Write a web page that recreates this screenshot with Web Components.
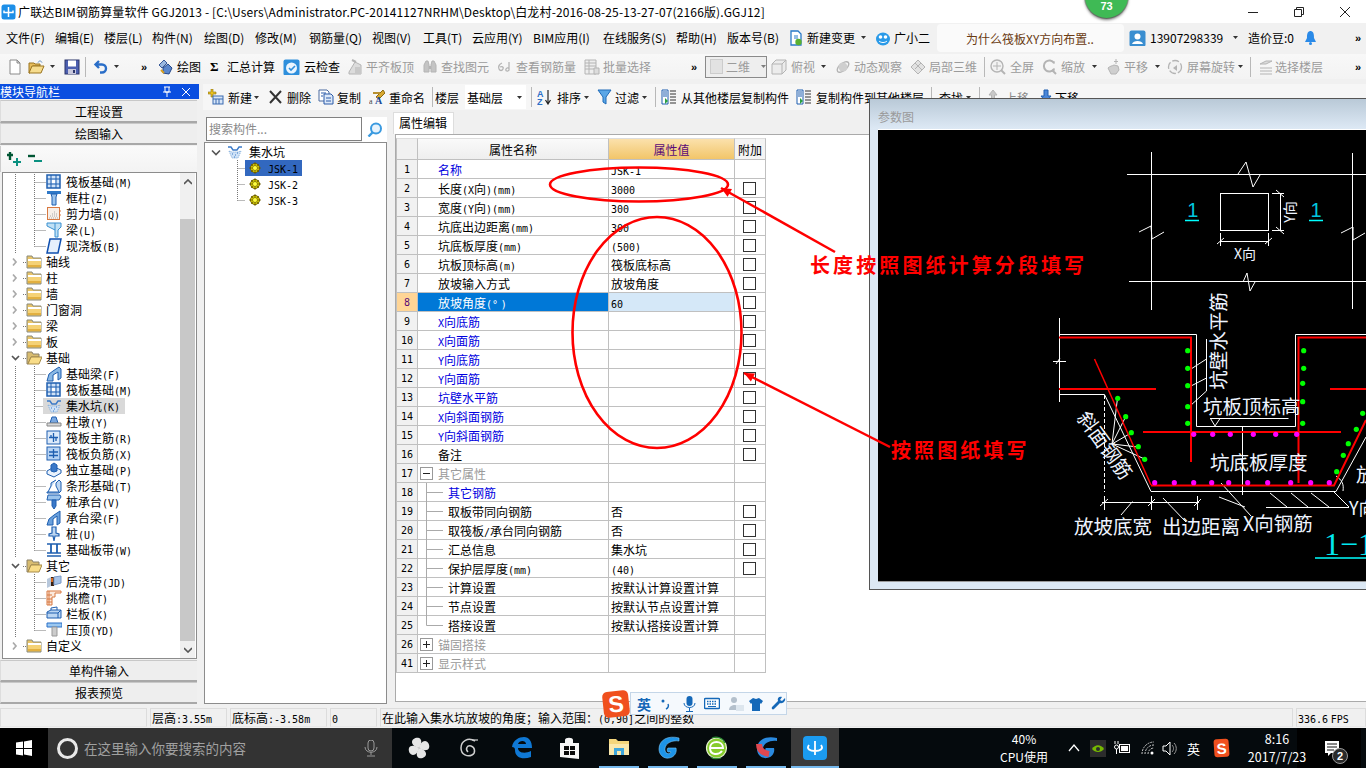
<!DOCTYPE html>
<html lang="zh"><head><meta charset="utf-8"><title>广联达BIM钢筋算量软件</title>
<style>
html,body{margin:0;padding:0;width:1366px;height:768px;overflow:hidden;background:#f0f0f0;font:12px "Noto Sans CJK SC","Liberation Sans",sans-serif;color:#000}
</style></head><body>
<gl-app>
  <gl-titlebar></gl-titlebar>
  <gl-menubar></gl-menubar>
  <gl-toolbar></gl-toolbar>
  <gl-main>
    <gl-nav slot="nav"></gl-nav>
    <gl-subbar slot="bar"></gl-subbar>
    <gl-list slot="list"></gl-list>
    <gl-props slot="props"></gl-props>
  </gl-main>
  <gl-status></gl-status>
  <win-taskbar></win-taskbar>
  <gl-badge>73</gl-badge>
  <gl-dialog></gl-dialog>
  <gl-ime></gl-ime>
  <gl-marks></gl-marks>
</gl-app>
<script>
const CJK='"Noto Sans CJK SC","Liberation Sans",sans-serif';
const MONO='"DejaVu Sans Mono","Noto Sans CJK SC",monospace';
const esc=s=>s.replace(/&/g,'&amp;').replace(/</g,'&lt;');
// Latin runs of the app's bitmap font are 6px per character
const fmt=s=>esc(s).replace(/[\x21-\x7e°]+/g,m=>`<span class="l">${m}</span>`);
const svg=(body,w=16,h=16,vb)=>`<svg width="${w}" height="${h}" viewBox="${vb||`0 0 ${w} ${h}`}" style="display:block;flex:none">${body}</svg>`;
const G='#b4b4b4',G2='#dcdcdc',B='#1f5fb0',L='#cfe2f7';
const I={
new:`<path d="M3 1h7l3 3v11H3z" fill="#fff" stroke="#8a8a8a"/><path d="M10 1v3h3z" fill="#ddd" stroke="#8a8a8a"/>`,
open:`<path d="M1 4h5l1 1h5v2H5l-3 7H1z" fill="#e7bd5c" stroke="#9a7420"/><path d="M4 7h12l-3 7H1z" fill="#f6dc8e" stroke="#9a7420"/><path d="M10 3.500c1-2 3-2 4 0" stroke="#5a8ac0" fill="none"/>`,
save:`<rect x="1" y="1" width="14" height="14" fill="#4c5fb0" stroke="#2a3468"/><rect x="4" y="1.500" width="8" height="6" fill="#fff"/><rect x="4" y="10" width="8" height="5" fill="#c8c8dc"/><rect x="9" y="11" width="2" height="3" fill="#2a3468"/>`,
undo:`<path d="M6 2L2.500 5.500 6 9M3 5.500h6a4 4 0 0 1 0 8H7" stroke="#2a6ec8" stroke-width="2.400" fill="none"/>`,
draw:`<path d="M2 6l5-5 3 3-5 5z" fill="#9ab8e0" stroke="#3a5a98"/><path d="M6 9l5-4 4 4-3 6-6-1z" fill="#5a86cc" stroke="#24488a"/><path d="M4 11l3 3" stroke="#d8a020" stroke-width="2"/>`,
cloud:`<rect x="0.500" y="0.500" width="16" height="16" rx="2" fill="#2e8fdc"/><circle cx="8.500" cy="9" r="5.500" fill="#eaf5ff"/><path d="M6 9l2 2 4-4" stroke="#2e8fdc" stroke-width="1.600" fill="none"/>`,
align:`<path d="M2 13l6-10 6 3v9H2z" fill="${G2}" stroke="${G}"/><path d="M8 8h6v7H8z" fill="#c8c8c8"/><path d="M5 1l4 2" stroke="${G}" stroke-width="2"/>`,
binoc:`<path d="M2 6l2-4h2l1 4v7H2zM9 6l1-4h2l2 4v7H9z" fill="#c4c4c4" stroke="${G}"/><path d="M7 7h2v3H7z" fill="${G}"/>`,
six:`<path d="M6 4C3 5 2 8 3 10s3 2 4 0-1-3-3-2M13 3v8c-1 2-4 1-3-1s3-1 3 0" stroke="${G}" stroke-width="1.300" fill="none"/>`,
batch:`<path d="M1 1h11v14H1z" fill="#eee" stroke="${G}"/><path d="M1 4h11M1 7h11M1 10h11M5 1v14" stroke="${G}"/><path d="M10 9h5v6h-5z" fill="${G2}" stroke="${G}"/>`,
cube:`<path d="M1 5l4-4h10v10l-4 4H1z" fill="#ececec" stroke="${G}"/><path d="M1 5h10v10M11 5l4-4" fill="none" stroke="${G}"/>`,
orbit:`<ellipse cx="8" cy="8" rx="7" ry="3.500" transform="rotate(-40 8 8)" fill="none" stroke="${G}" stroke-width="1.400"/><circle cx="8" cy="8" r="4.500" fill="#cfcfcf"/>`,
local:`<path d="M8 1l7 7-7 7-7-7z" fill="#e2e2e2" stroke="${G}"/><path d="M5 4l7 7M8 1L4 5M11 4l-6 6" stroke="${G}"/>`,
zall:`<circle cx="7" cy="7" r="6" fill="#f2f2f2" stroke="${G}" stroke-width="1.400"/><path d="M7 3v8M3 7h8" stroke="${G}"/><path d="M11 11l4 4" stroke="${G}" stroke-width="2"/>`,
zoom:`<path d="M12 4a5.500 5.500 0 1 0 0 6" fill="none" stroke="${G}" stroke-width="2"/><path d="M10 11l4 4" stroke="${G}" stroke-width="2"/><path d="M12 2v3M12 9v3" stroke="${G}"/>`,
pan:`<path d="M3 9c2-2 4-2 6-3l4 1 1 4-3 4H6z" fill="#cfcfcf" stroke="${G}"/><path d="M11 0v5M9 2.500h4" stroke="${G}"/>`,
rot:`<circle cx="8" cy="8" r="6.500" fill="#f2f2f2" stroke="${G}" stroke-width="1.300" stroke-dasharray="7 2"/><path d="M6 9l4-3v6z" fill="${G}"/>`,
lay:`<path d="M2 5l6-3 6 0-6 3zM2 9h12M2 12h12M2 15h12" fill="${G2}" stroke="${G}"/>`,
newc:`<path d="M3 0v3H0v2h3v3h2V5h3V3H5V0z" fill="#e8c020" stroke="#8a7010" stroke-width=".6"/><rect x="5" y="7" width="10" height="8" fill="#d8e6f8" stroke="#3a6ab0"/><path d="M5 10h10M8 10v5M11 10v5" stroke="#3a6ab0"/>`,
x:`<path d="M2 2l11 12M13 2L2 14" stroke="#333" stroke-width="2"/>`,
copy:`<path d="M1 1h8l2 2v9H1z" fill="#fff" stroke="#4a6aa0"/><path d="M6 5h7l2 2v8H6z" fill="#dce8f8" stroke="#2a5aa8"/><path d="M3 4h5M3 7h2M8 9h5M8 12h5" stroke="#2a5aa8"/>`,
ren:`<path d="M7 8L14 1l2 3-6 6z" fill="#d8a830" stroke="#8a6a10"/><path d="M4 4h7" stroke="#b89030" stroke-width="2"/><text x="0" y="15" font-size="8" font-family="Liberation Serif,serif" fill="#444">a</text><text x="6" y="15" font-size="10" font-weight="700" font-family="Liberation Serif,serif" fill="#1a4a98">A</text>`,
az:`<text x="0" y="8" font-size="9" font-family="Liberation Sans,sans-serif" font-weight="700" fill="#2a6ec8">A</text><text x="0" y="16" font-size="9" font-family="Liberation Sans,sans-serif" font-weight="700" fill="#2a6ec8">Z</text><path d="M11 1v13M8.500 11l2.500 4 2.500-4" fill="none" stroke="#222" stroke-width="1.200"/>`,
fun:`<path d="M1 1h13L9 8v7l-3-2V8z" fill="#5aa6e6" stroke="#1f6ab8"/>`,
from:`<path d="M1 1h6v14H1z" fill="#fff" stroke="#1f5fb0"/><path d="M2 3h4M2 5h4M2 7h4" stroke="#1f5fb0"/><path d="M4 9l3 3-3 3z" fill="#2aa040"/><path d="M9 2h6M9 5h6M9 8h6M9 11h6M9 14h6" stroke="#333"/>`,
up:`<path d="M5 1l4 5H6.500v5h-3V6H1z" fill="#c8c8c8" stroke="${G}"/>`,
down:`<path d="M4 1h4v6h3l-5 6-5-6h3z" fill="#4a86d8" stroke="#1f5fb0"/>`,
doc:`<path d="M2 1h7l3 3v11H2z" fill="#fff" stroke="#2a7ac8" stroke-width="1.300"/><path d="M5 6h4M5 8h4" stroke="#2a7ac8"/><circle cx="9.500" cy="12" r="3.200" fill="#5ab030"/>`,
qq:`<ellipse cx="8" cy="9" rx="7" ry="6.500" fill="#2a9ae8"/><circle cx="5.500" cy="7" r="1.800" fill="#fff"/><circle cx="10.500" cy="7" r="1.800" fill="#fff"/><path d="M4 11c2 2 6 2 8 0" stroke="#fff" fill="none"/>`,
user:`<rect x=".5" y=".5" width="16" height="16" rx="2" fill="#3a8ed0"/><circle cx="8.500" cy="6.500" r="3" fill="#fff"/><path d="M3 14c1-4 10-4 11 0z" fill="#fff"/>`,
bell:`<path d="M6 1h1c3 1 3 4 3 7l2 4H1l2-4c0-3 0-6 3-7z" fill="#2a8ae8"/><circle cx="6.500" cy="13.500" r="1.500" fill="#2a8ae8"/>`,
folder:`<path d="M1 2h5l1 2h8v10H1z" fill="#e8c468" stroke="#8a8a7a"/><path d="M2 5h13v2H2z" fill="#fff"/><path d="M2 7h13v6H2z" fill="#f5d276"/><path d="M2 11h13v2H2z" fill="#e2b040"/>`,
folderO:`<path d="M1 2h5l1 2h6v3H5l-3 7H1z" fill="#d8bc70" stroke="#8a8068"/><path d="M5 7h11l-3 7H2z" fill="#f8dc88" stroke="#a88c48"/>`,
raft:`<rect x="1" y="1" width="13" height="13" fill="${L}" stroke="${B}" stroke-width="1.500"/><path d="M1 5h13M1 10h13M5 1v13M10 1v13" stroke="${B}"/><rect x="6" y="6" width="3" height="3" fill="#fff"/>`,
col:`<path d="M1 1h14v3H1z" fill="#2f79c8"/><path d="M5 4h6l-1 3v8H6V7z" fill="#9cc4ec" stroke="${B}"/>`,
wall:`<rect x="1.500" y="1.500" width="12" height="12" fill="#f7efe8" stroke="#d87840"/><path d="M3 12h9M4 10h8M6 8h5M8 6h2" stroke="#aaa" stroke-dasharray="1 1"/><path d="M14 4v2M14 8v2" stroke="#d87840"/>`,
beam:`<path d="M1 1h14v4l-3 3v7H9V8L1 4z" fill="#bfe0f5" stroke="#3a90d0"/><path d="M9 1v7" stroke="#3a90d0"/>`,
slab:`<path d="M4 1h11l-3 14H1z" fill="#e6f0fc" stroke="#1050b0" stroke-width="1.500"/>`,
fb:`<path d="M1 15l2-7 4-3 6-4 2 2v9l-3 2V6l-5 3v6z" fill="#8ab8e4" stroke="${B}"/>`,
pit:`<path d="M1 3h3l2 3h4l2-3h3" fill="none" stroke="#3a7ac8" stroke-width="1.400"/><path d="M2 7l3 7h6l3-7-3 1H5z" fill="#cfe2f7" stroke="#7aa8d8" stroke-dasharray="1 1"/><path d="M5 10h1M8 11h1M10 9h1M7 13h1" stroke="#3a7ac8"/>`,
pier:`<path d="M6 3h4l2 6H4z" fill="#7aa8e0" stroke="${B}"/><path d="M1 9h14v3H1z" fill="#d8d8d8" stroke="#888"/>`,
main:`<rect x="1" y="1" width="13" height="13" fill="#dceafa" stroke="${B}"/><path d="M7.500 3v9M3 7.500h9M5 5v3M10 8v3" stroke="${B}" stroke-width="1.300"/>`,
neg:`<rect x="1" y="1" width="13" height="13" fill="#b8d4f4" stroke="${B}"/><path d="M7.500 3v9M3 6h9M3 9.500h9" stroke="${B}" stroke-width="1.300"/>`,
iso:`<path d="M1 9l7-4 7 3v3l-7 4-7-3z" fill="#eaf2fc" stroke="${B}"/><path d="M5 3l3-2 3 2v6l-3 1-3-1z" fill="#3a78c8" stroke="${B}"/>`,
strip:`<path d="M1 14h12l-3-6V5l3-3 2 2v9l-2 2H1zM2 14l3-6V5l5-3" fill="#bcd6f2" stroke="${B}"/>`,
cap:`<path d="M2 1h12l1 2-2 3H1z" fill="#9cc4ec" stroke="${B}"/><path d="M6 6h4v6l-2 3-2-3z" fill="#3a78c8" stroke="${B}"/>`,
cb:`<path d="M1 15l2-6 5-4 6-4v12l-3 2V6l-4 3v6z" fill="#6aa0dc" stroke="${B}"/>`,
pile:`<path d="M6 1h4v6l3 1v2H9l-1 5-1-5H3V8l3-1z" fill="#bcd6f2" stroke="${B}" stroke-width="1.200"/>`,
band:`<path d="M1 2h14M1 14h14M1 11h14" stroke="${B}" stroke-width="1.400"/><path d="M5 2v9M11 2v9" stroke="${B}" stroke-width="1.800"/>`,
post:`<path d="M1 5l4-2v9l-4 2z" fill="#b8c8dc"/><path d="M5 3h3v9H5z" fill="#3a2010"/><path d="M8 3l7-1v7l-7 2z" fill="#a8c4e8" stroke="#7a9ac8"/><path d="M5 4h2v4H5z" fill="#d86a20"/>`,
eave:`<path d="M1 1h14l0 2H9v4H6v8H1z" fill="#fbe9dc" stroke="#d87840"/><path d="M1 5h5M1 9h5M1 12h5M3 1v14" stroke="#d87840"/>`,
rail:`<path d="M1 6l4-2h10v8H1z" fill="#bcd6f2" stroke="${B}"/><path d="M1 7h11v5M12 7l3-3M5 4V2l6-1v3" fill="none" stroke="${B}"/>`,
top:`<path d="M1 1h15v4H1z" fill="#9cc8f0" stroke="#2a70c8"/><path d="M6 5h5v9H6z" fill="#ccc" stroke="#999"/>`,
star:`<circle cx="6" cy="6" r="4.500" fill="#e8e000" stroke="#6a5a00"/><path d="M6 0v12M0 6h12M2 2l8 8M10 2l-8 8" stroke="#6a5a00" stroke-width=".8"/><circle cx="6" cy="6" r="2.500" fill="#ffff40" stroke="#6a5a00" stroke-width=".7"/>`
};
const ic=(n,w=16,h=16,vbw=16,vbh=16)=>svg(I[n],w,h,`0 0 ${vbw} ${vbh}`);
const ARROW=svg(`<path d="M0 0h5L2.500 3z" fill="#333"/>`,5,3);
const MORE=`<b style="font:700 11px 'Liberation Sans',sans-serif;letter-spacing:-1px">»</b>`;
function strip(items,end){
  return items.map((it,i)=>{
    const w=(i+1<items.length?items[i+1][0]:end)-it[0];
    const k=it[1],v=it[2];
    let c='';
    if(k=='i')c=ic(v,it[3]||16,16,it[3]||16,16);
    else if(k=='t')c=`<span>${v}</span>`;
    else if(k=='T')c=`<span class="off">${v}</span>`;
    else if(k=='a')c=ARROW;
    else if(k=='m')c=MORE;
    else if(k=='d')c='<i class="div"></i>';
    else c=v;
    return `<span class="c" style="width:${w}px">${c}</span>`;
  }).join('');
}
const stripCss=`.c{display:flex;align-items:center;flex:none;height:100%;white-space:nowrap;overflow:visible}
.off{color:#9b9b9b}.div{display:block;width:1px;height:20px;background:#b8b8b8}`;
function def(name,css,html){
  customElements.define(name,class extends HTMLElement{
    constructor(){super();this.attachShadow({mode:'open'}).innerHTML=`<style>${css}</style>${html}`;}
  });
}

def('gl-app',`:host{display:flex;flex-direction:column;position:relative;width:1366px;height:768px;overflow:hidden;background:#f0f0f0;font:12px ${CJK};color:#000}`,`<slot></slot>`);

def('gl-titlebar',`:host{display:flex;align-items:center;height:23px;background:#fff;flex:none}
.logo{margin:0 2px 0 1px}.t{flex:1;white-space:nowrap;letter-spacing:.135px;line-height:23px}
.w{display:flex;align-items:center;height:100%}.b{width:46px;display:flex;justify-content:center}`,
`<span class="logo">${svg(`<rect x=".5" y=".5" width="14" height="15" rx="2.500" fill="#1d8fe8"/><path d="M7.500 3v10M3 6.500v2h9v-2" stroke="#fff" stroke-width="1.500" fill="none"/>`,15,16)}</span>
<span class="t">广联达BIM钢筋算量软件 GGJ2013 - [C:\\Users\\Administrator.PC-20141127NRHM\\Desktop\\白龙村-2016-08-25-13-27-07(2166版).GGJ12]</span>
<span class="w"><span class="b">${svg(`<path d="M0 5.500h10" stroke="#222"/>`,10,10)}</span><span class="b">${svg(`<path d="M.5 2.500h7v7h-7zM2.500 2.500v-2h7v7h-2" fill="none" stroke="#222"/>`,10,10)}</span><span class="b" style="margin-right:-2px">${svg(`<path d="M0 0l10 10M10 0L0 10" stroke="#222"/>`,10,10)}</span></span>`);

const menu=[[6,'文件(F)'],[55,'编辑(E)'],[104,'楼层(L)'],[152,'构件(N)'],[204,'绘图(D)'],[255,'修改(M)'],[309,'钢筋量(Q)'],[372,'视图(V)'],[423,'工具(T)'],[472,'云应用(Y)'],[533,'BIM应用(I)'],[603,'在线服务(S)'],[676,'帮助(H)'],[727,'版本号(B)']].map(m=>[m[0],'t',m[1]]);
menu.push([789,'i','doc'],[807,'t','新建变更'],[861,'a'],[875,'i','qq'],[894,'t','广小二']);
def('gl-menubar',`:host{display:flex;height:31px;flex:none;background:#f1f1f1;box-sizing:border-box;padding-left:6px}
${stripCss}.row{display:flex;height:29px}.tab{width:187px;height:28px;margin-top:1px;background:#fafafa;border-radius:4px;padding-left:29px;box-sizing:border-box;display:flex;align-items:center;color:#6a3a12;white-space:nowrap}
.r{display:flex;height:29px}`,
`<div class="row">${strip(menu,937)}</div><div class="tab">为什么筏板XY方向布置..</div><div class="r">${strip([[1129,'i','user',17],[1150,'t','13907298339'],[1233,'a'],[1248,'t','造价豆:0'],[1304,'i','bell',13],[1355,'m']],1366).replace('<span class="c" style="width:21px">','<span class="c" style="width:21px;margin-left:5px">')}</div>`);

const combo=`<span style="display:flex;align-items:center;box-sizing:border-box;width:62px;height:22px;border:1px solid #8a8a8a;background:#eee;color:#9b9b9b;padding-left:4px;gap:3px"><i style="display:block;width:13px;height:13px;background:#e2e2e2;border:1px solid #ccc"></i>二维<span style="margin-left:8px;opacity:.6">${ARROW}</span></span>`;
const tb=[[7,'i','new'],[28,'i','open',18],[50,'a'],[64,'i','save'],[85,'d'],[93,'i','undo'],[114,'a'],[141,'m'],[157,'i','draw'],[177,'t','绘图'],[210,'x','<b style="font:700 13px Liberation Serif,serif">Σ</b>'],[227,'t','汇总计算'],[283,'i','cloud',17],[304,'t','云检查'],[347,'i','align'],[366,'T','平齐板顶'],[422,'i','binoc'],[441,'T','查找图元'],[496,'i','six'],[516,'T','查看钢筋量'],[584,'i','batch'],[603,'T','批量选择'],[691,'m'],[705,'x',combo],[771,'i','cube'],[791,'T','俯视'],[821,'a'],[835,'i','orbit'],[854,'T','动态观察'],[910,'i','local'],[929,'T','局部三维'],[984,'d'],[990,'i','zall'],[1010,'T','全屏'],[1042,'i','zoom'],[1061,'T','缩放'],[1092,'a'],[1105,'i','pan'],[1124,'T','平移'],[1155,'a'],[1167,'i','rot'],[1187,'T','屏幕旋转'],[1238,'a'],[1250,'d'],[1258,'i','lay'],[1275,'T','选择楼层'],[1355,'m']];
def('gl-toolbar',`:host{display:flex;height:30px;flex:none;background:#f0f0f0}
${stripCss}.b{display:flex;height:25px;background:linear-gradient(#f8f8f8,#f3f3f3);width:100%;padding-left:7px;box-sizing:border-box}`,
`<div class="b">${strip(tb,1366)}</div>`);

def('gl-main',`:host{display:grid;grid-template-columns:199px 5px 183px 1fr;grid-template-rows:26px 1fr;height:624px;flex:none;background:#f0f0f0}
::slotted([slot=nav]){grid-row:1/3;grid-column:1}
::slotted([slot=bar]){grid-column:2/5;grid-row:1}
::slotted([slot=list]){grid-column:3;grid-row:2}
::slotted([slot=props]){grid-column:4;grid-row:2}`,`<slot name="nav"></slot><slot name="bar"></slot><slot name="list"></slot><slot name="props"></slot>`);

def('gl-nav-btn',`:host{display:flex;align-items:center;justify-content:center;box-sizing:border-box;height:22px;margin-bottom:1px;background:#eee;border:1px solid #c8c8c8;border-bottom:2px solid #a8a8a8;border-right:0;border-left:1px solid #ddd;font-size:12px}`,`<slot></slot>`);

const tree=[
['raft','筏板基础(M)','c'],['col','框柱(Z)','c'],['wall','剪力墙(Q)','c'],['beam','梁(L)','c'],['slab','现浇板(B)','l'],
['folder','轴线','f'],['folder','柱','f'],['folder','墙','f'],['folder','门窗洞','f'],['folder','梁','f'],['folder','板','f'],['folderO','基础','o'],
['fb','基础梁(F)','c'],['raft','筏板基础(M)','c'],['pit','集水坑(K)','s'],['pier','柱墩(Y)','c'],['main','筏板主筋(R)','c'],['neg','筏板负筋(X)','c'],['iso','独立基础(P)','c'],['strip','条形基础(T)','c'],['cap','桩承台(V)','c'],['cb','承台梁(F)','c'],['pile','桩(U)','c'],['band','基础板带(W)','l'],
['folderO','其它','o'],['post','后浇带(JD)','c'],['eave','挑檐(T)','c'],['rail','栏板(K)','c'],['top','压顶(YD)','l'],['folder','自定义','e']];
function guide(t){
  const d='stroke="#777" stroke-dasharray="1 1" fill="none"';
  const v1=`<path d="M12.500 0v16" ${d}/>`;
  if(t=='f'||t=='e')return svg(`<path d="M10 4.500l3 3.500-3 3.500" fill="none" stroke="#aaa" stroke-width="1.700"/><path d="M20 8.500h3" ${d}/>`,23,16);
  if(t=='o')return svg(`<path d="M9 6l3.500 3.500L16 6" fill="none" stroke="#555" stroke-width="1.700"/><path d="M20 8.500h3" ${d}/>`,23,16);
  const hgt=(t=='l')?8.5:16;
  return svg(v1+`<path d="M31.500 0v${hgt}M31.500 8.500h11" ${d}/>`,43,16);
}
const treeRows=tree.map(r=>{
  const folder='feo'.includes(r[2]);
  return `<div class="row">${guide(r[2])}<span class="in ${r[2]=='s'?'sel':''}${folder?' fo':''}">${ic(r[0])}<span class="tx">${fmt(r[1])}</span></span></div>`;
}).join('');
def('gl-nav',`:host{display:flex;flex-direction:column;height:624px;overflow:hidden;box-sizing:border-box;padding:0 2px 4px 0;width:199px}
.head{height:15px;background:#0a4ee0;color:#fff;display:flex;align-items:center;line-height:15px;width:199px;flex:none;margin-bottom:1px;margin-right:-2px}
.head b{font-weight:400;flex:1;font-size:12px}.head svg{margin-right:8px}
.plus{height:26px;flex:none;background:linear-gradient(#fafafa,#f3f3f3);border-left:1px solid #ccc;display:flex;align-items:center;padding-left:6px;gap:7px;box-sizing:border-box}
.tree{flex:1;min-height:0;display:flex;margin-left:2px;border:1px solid #8c8c8c;background:#fff;margin-bottom:1px;box-sizing:border-box}
.rows{flex:1;padding-top:1px;overflow:hidden;min-width:0}
.row{height:16px;display:flex;align-items:center;white-space:nowrap}
.in{display:flex;align-items:center;height:16px;padding-right:5px}
.tx{margin-left:4px;line-height:16px}.sel{background:#d9d9d9;margin-left:-3px;padding-left:3px}
.l{font:10px ${MONO}}
.sb{width:15px;flex:none;display:flex;flex-direction:column;background:#f0f0f0;margin-right:1px}
.sb .up,.sb .dn{display:flex;align-items:center;justify-content:center}
.sb .up{height:46px;align-items:flex-start;padding-top:6px;box-sizing:border-box}.sb .th{flex:1;background:#c8c8c8}.sb .dn{height:17px}
.low{height:21px}`,
`<div class="head"><b>模块导航栏</b>${svg(`<path d="M3 1h6M4 1v5h4V1M2 6h8M6 6v5" stroke="#fff" fill="none"/>`,12,12)}${svg(`<path d="M1 1l8 8M9 1L1 9" stroke="#fff"/>`,10,10)}</div>
<gl-nav-btn style="height:23px;margin:0;padding-top:1px">工程设置</gl-nav-btn><gl-nav-btn>绘图输入</gl-nav-btn>
<div class="plus">${svg(`<path d="M3 0v8M0 3h6" stroke="#053" stroke-width="2.400"/><path d="M10 6v8M6 10h8" stroke="#0a9080" stroke-width="2"/>`,14,14)}${svg(`<path d="M0 4h7" stroke="#053" stroke-width="2.400"/><path d="M6 9h8" stroke="#0a9080" stroke-width="2"/>`,14,14)}</div>
<div class="tree"><div class="rows">${treeRows}</div><div class="sb"><div class="up">${svg(`<path d="M0 5l4-4 4 4" stroke="#555" stroke-width="1.600" fill="none"/>`,8,6)}</div><div class="th"></div><div class="dn">${svg(`<path d="M0 1l4 4 4-4" stroke="#555" stroke-width="1.600" fill="none"/>`,8,6)}</div></div></div>
<gl-nav-btn class="low" style="height:22px;margin-bottom:0;margin-top:0">单构件输入</gl-nav-btn><gl-nav-btn style="height:22px;margin:0">报表预览</gl-nav-btn>`);

def('gl-subbar',`:host{display:block;height:26px;overflow:hidden}
${stripCss}.b{display:flex;height:26px;background:#f6f6f6;width:1163px;margin-left:4px;padding-left:5px;box-sizing:border-box}.off{color:#888}`,
`<div class="b">${strip([[208,'i','newc'],[228,'t','新建'],[254,'a'],[268,'i','x'],[287,'t','删除'],[318,'i','copy'],[337,'t','复制'],[369,'i','ren'],[389,'t','重命名'],[432,'d'],[435,'t','楼层'],[465,'x','<span style="display:flex;align-items:center;box-sizing:border-box;width:61px;height:24px;background:#fff;padding:0 4px 0 2px;justify-content:space-between"><span>基础层</span>'+ARROW+'</span>'],[531,'d'],[537,'i','az'],[557,'t','排序'],[584,'a'],[597,'i','fun'],[615,'t','过滤'],[642,'a'],[655,'d'],[661,'i','from'],[681,'t','从其他楼层复制构件'],[796,'i','from'],[816,'t','复制构件到其他楼层'],[931,'d'],[939,'t','查找'],[966,'a'],[979,'d'],[988,'i','up'],[1005,'T','上移'],[1040,'i','down'],[1055,'t','下移']],1366)}</div>`);

def('gl-list',`:host{display:flex;flex-direction:column;box-sizing:border-box;height:595px;padding-bottom:1px;background:#f0f0f0}
.s{display:flex;height:32px;flex:none;padding-top:7px;box-sizing:border-box;background:#f0f0f0}
.in{box-sizing:border-box;width:156px;height:24px;margin:0 0 0 2px;border:1px solid #808080;background:#fff;color:#8a8a8a;padding:0 2px;line-height:21px;display:block;font-size:12px}
.m{flex:1;height:25px;background:#fff;display:flex;align-items:center;padding-left:5px;box-sizing:border-box}
.t{flex:1;background:#fff;border:1px solid #8c8c8c;padding-top:1px;box-sizing:border-box}
.row{height:16px;display:flex;align-items:center}
.tx{line-height:16px}.l{font:10px ${MONO}}
.sel{width:57px;background:#3268bf}`,
`<div class="s"><div class="in">搜索构件...</div><div class="m">${svg(`<circle cx="9" cy="6.500" r="5" fill="#e8f3fc" stroke="#3a9ae0" stroke-width="2"/><path d="M5.500 10.500L1.500 14.500" stroke="#3a9ae0" stroke-width="2.400"/>`,15,15)}</div></div>
<div class="t"><div class="row">${svg(`<path d="M7 6.500l4 4 4-4" fill="none" stroke="#555" stroke-width="1.600"/>`,21,16)}${ic('pit',18,16)}<span class="tx" style="margin-left:5px">集水坑</span></div>
${['JSK-1','JSK-2','JSK-3'].map((n,i)=>`<div class="row">${svg(`<path d="M32.500 0v${i==2?8.5:16}M32.500 8.500H40" stroke="#777" stroke-dasharray="1 1" fill="none"/>`,40,16)}<span class="${i==0?'sel':''}" style="display:flex;align-items:center;height:16px;padding-left:4px;box-sizing:border-box">${svg(I.star,12,12)}<span class="tx" style="margin-left:7px">${fmt(n)}</span></span></div>`).join('')}</div>`);

const P=[
[1,'名称','JSK-1','b',0],[2,'长度(X向)(mm)','3000','',1],[3,'宽度(Y向)(mm)','300','',1],[4,'坑底出边距离(mm)','300','',1],[5,'坑底板厚度(mm)','(500)','',1],[6,'坑板顶标高(m)','筏板底标高','',1],[7,'放坡输入方式','放坡角度','',1],[8,'放坡角度(° )','60','s',1],
[9,'X向底筋','','b',1],[10,'X向面筋','','b',1],[11,'Y向底筋','','b',1],[12,'Y向面筋','','b',1],[13,'坑壁水平筋','','b',1],[14,'X向斜面钢筋','','b',1],[15,'Y向斜面钢筋','','b',1],[16,'备注','','',1],
[17,'其它属性','','g-',0],[18,'其它钢筋','','cb',0],[19,'取板带同向钢筋','否','c',1],[20,'取筏板/承台同向钢筋','否','c',1],[21,'汇总信息','集水坑','c',1],[22,'保护层厚度(mm)','(40)','c',1],[23,'计算设置','按默认计算设置计算','c',0],[24,'节点设置','按默认节点设置计算','c',0],[25,'搭接设置','按默认搭接设置计算','cl',0],
[26,'锚固搭接','','g+',0],[41,'显示样式','','g+',0]];
const line=(last)=>svg(`<path d="M8.500 -2v${last?11.5:21}M8.500 9.500H25" stroke="#aaa" fill="none"/>`,30,19);
const box=(p)=>`<span class="bx">${svg(`<path d="M2 4.500h7${p?'M5.500 1v7':''}" stroke="#222"/>`,11,9)}</span>`;
const propRows=P.map(r=>{
  const [n,name,val,k,chk]=r;
  let nm;
  if(k[0]=='c'){nm=line(k=='cl')+`<span class="${k=='cb'?'blue':''}">${fmt(name)}</span>`;}
  else if(k[0]=='g'){nm=box(k=='g+')+`<span class="gr">${name}</span>`;}
  else nm=`<span class="pad ${k=='b'?'blue':''}">${fmt(name)}</span>`;
  return `<div class="r${k=='s'?' sel':''}"><span class="n">${n}</span><span class="nm">${nm}</span><span class="v">${fmt(val)}</span><span class="x">${chk?'<i class="ck"></i>':''}</span></div>`;
}).join('');
def('gl-props',`:host{display:block;box-sizing:border-box;height:595px;background:#f0f0f0;width:979px}
.tabbar{height:24px;padding:2px 0 0 6px;display:flex;align-items:flex-end;box-sizing:border-box}
.tab{width:61px;height:22px;background:#fff;border:1px solid #ddd;border-bottom:0;line-height:20px;padding-left:5px;box-sizing:border-box}
.body{height:568px;background:#fff;border:1px solid #aaa;margin-left:8px;box-sizing:border-box;padding-top:3px;border-right:0}
.l{font:10px ${MONO}}
.r{display:flex;height:19px;box-sizing:border-box;line-height:18px;white-space:nowrap}
.r>span{box-sizing:border-box;border-right:1px solid #c0c0c0;border-bottom:1px solid #c0c0c0;height:19px;padding-top:1px}
.r>.nm svg{margin-top:-1px}
.n{width:22px;background:#f1f1f1;text-align:center;font:10px/17px ${MONO};border-left:1px solid #c0c0c0}
.nm{width:191px;display:flex;align-items:center}
.pad{padding-left:20px}.blue{color:#0000e0}.gr{color:#9a9a9a;margin-left:5px}
.bx{display:flex;align-items:center;justify-content:center;width:13px;height:13px;box-sizing:border-box;border:1px solid #999;margin-left:2px}
.r>.nm .bx svg{margin:0}
.r>.v{width:126px;padding-left:2px}.x{width:31px;display:flex;align-items:center;justify-content:center}
.ck{display:block;width:13px;height:13px;box-sizing:border-box;border:1px solid #333;background:#fff;margin-left:-1px}
.sel .n{background:#ffd596;color:#5a0a78}.sel .nm{background:#0078d7;color:#fff}.sel .v{background:#d5e8f8}
.h{display:flex;height:22px}.h>span{box-sizing:border-box;display:flex;align-items:center;justify-content:center;border-right:1px solid #c0c0c0;border-bottom:1px solid #c0c0c0;border-top:1px solid #ddd}
.h .a{width:22px;background:#f1f1f1;border-left:1px solid #c0c0c0}.h .b{width:191px;background:linear-gradient(#fafafa,#eee)}
.h .c{width:126px;background:linear-gradient(#fbe1ac,#f2c569);color:#5a0a78}.h .d{width:31px;background:#f4f4f4}`,
`<div class="tabbar"><div class="tab">属性编辑</div></div><div class="body"><div class="h"><span class="a"></span><span class="b">属性名称</span><span class="c">属性值</span><span class="d">附加</span></div>${propRows}</div>`);

def('gl-status',`:host{display:flex;height:20px;flex:none;gap:3px;background:#f0f0f0;box-sizing:border-box;padding-bottom:1px;white-space:nowrap}
span{display:block;box-sizing:border-box;border:1px solid #dcdcdc;border-bottom-color:#e8e8e8;line-height:18px;padding-left:1px;height:19px;overflow:hidden}
.l{font:10px ${MONO};border:0;display:inline;padding:0;line-height:1}`,
`<span style="width:147px"></span><span style="width:77px">${fmt('层高:3.55m')}</span><span style="width:97px">${fmt('底标高:-3.58m')}</span><span style="width:47px">${fmt('0')}</span><span style="width:913px">${fmt('在此输入集水坑放坡的角度；输入范围：(0,90]之间的整数')}</span><span style="width:70px">${fmt('336.6 FPS')}</span>`);

const petal=`<path d="M11 11C7 10 4 8 4 5c0-3 4-5 7-4 3 1 3 6 0 10z" fill="#e6e6e6"/>`;
const tbIcons={
win:`<path d="M0 2.500l7-1v6.500H0zM8 1.500l8-1.500v8H8zM0 9h7v6.500l-7-1zM8 9h8v7l-8-1.500z" fill="#fff"/>`,
pin:[0,90,180,270].map(a=>`<g transform="rotate(${a} 11 11)">${petal}</g>`).join(''),
swirl:`<path d="M17 4C10 0 3 4 3 11s7 9 11 7 3-8-1-9-6 3-3 6" fill="none" stroke="#cfcfcf" stroke-width="1.500"/><path d="M14 3h6" stroke="#cfcfcf" stroke-width="1.200"/>`,
edge:`<path d="M1 10C2 3 8 0 13 0c5 0 8 4 8 11H7c0 5 7 6 13 3v6c-8 3-16 1-16-7 0-2-1-3-3-3zm6-3h8c0-4-7-4-8 0z" fill="#0f78d4"/>`,
store:`<path d="M6 6V3c0-3 8-3 8 0v3h6v16L1 20V6z" fill="#f6f6f6"/><path d="M5 9h5v4H5zM11 9h5v4h-5zM5 14h5v4H5zM11 14h5v4h-5z" fill="#0a0a0a"/>`,
exp:`<path d="M1 2h7l2 2h11v14H1z" fill="#f4d67c"/><path d="M1 7h20v11H1z" fill="#fae8ac"/><path d="M6 11h10v7H6z" fill="#3ea6dc"/><path d="M9 14h4v4H9z" fill="#fae8ac"/>`,
g:`<path d="M23 2c-11-3-20 2-20 11 0 6 5 10 10 9 6-1 8-6 7-10h-8c-1 0-1 4 0 4h3c-1 3-7 2-6-4 1-5 7-8 14-7z" fill="#1d94e8" stroke="#7ac8f8" stroke-width=".6"/>`,
ge:`<circle cx="11.500" cy="12" r="10" fill="#86cc2c" stroke="#e8f4d0" stroke-width="1.200"/><path d="M5 12h13c0-8-13-8-13 0s9 7 12 3" fill="none" stroke="#fff" stroke-width="2"/><path d="M7 2c5-2 11 0 13 5M16 22c-4 1-8 1-10-1" stroke="#2a8a30" fill="none" stroke-width="1.200"/>`,
gr:`<path d="M23 2c-11-3-20 2-20 11 0 6 5 10 10 9 6-1 8-6 7-10h-8c-1 0-1 4 0 4h3c-1 3-7 2-6-4 1-5 7-8 14-7z" fill="#2a8ae0"/><path d="M5 8c0 6 4 9 10 10" stroke="#e04850" stroke-width="6" fill="none"/>`,
app:`<rect x="0" y="0" width="24" height="24" rx="4" fill="#1b9bf0"/><path d="M12 5v14M6 9c-3 4 1 6 6 6s9-2 6-6" stroke="#fff" stroke-width="1.800" fill="none"/>`
};
const tbx=(n,w=22,h=22)=>svg(tbIcons[n],w,h,`0 0 ${n=='g'||n=='gr'||n=='ge'||n=='app'?24:22} ${n=='g'||n=='gr'||n=='ge'||n=='app'?24:22}`);
def('win-taskbar',`:host{display:flex;height:40px;flex:none;background:linear-gradient(90deg,#050a0d 1297px,#000 1297px,#000 1361px,#050a0d 1361px);color:#fff;white-space:nowrap}
.st{width:48px;background:#000;display:flex;align-items:center;justify-content:center}
.se{width:344px;background:#333;display:flex;align-items:center;color:#a0a0a0;font-size:13.500px;box-sizing:border-box;padding-left:9px}
.ring{width:21px;height:21px;box-sizing:border-box;border:3px solid #e8e8e8;border-radius:50%;margin-right:6px;flex:none}
.cell{display:flex;align-items:center;justify-content:center;height:40px;box-sizing:border-box;flex:none}
.u{border-bottom:2px solid #76b9ed;padding-top:2px}
.act{background:#3b3b3b}
.tray{display:flex;align-items:center;flex:none;height:40px}
.cp{display:flex;flex-direction:column;align-items:center;width:48px;margin-left:161px;font-size:12px;line-height:18px}
.tm{display:flex;flex-direction:column;align-items:center;width:60px;margin-left:18px;line-height:18px;font-size:12.500px}
.nt{position:relative;margin-left:18px}
.num{position:absolute;left:7px;top:7px;width:16px;height:16px;border-radius:50%;background:#2a2a2a;border:1px solid #999;box-sizing:border-box;font:700 11px/14px "Liberation Sans",sans-serif;text-align:center}`,
`<div class="st">${svg(tbIcons.win,16,16)}</div>
<div class="se"><span class="ring"></span><span style="flex:1">在这里输入你要搜索的内容</span>${svg(`<rect x="4" y="0" width="6" height="11" rx="3" fill="none" stroke="#9a9a9a"/><path d="M1 7c0 7 12 7 12 0M7 12v3M3 16h8" stroke="#9a9a9a" fill="none"/>`,14,17)}<span style="width:14px"></span></div>
<span class="cell" style="width:16px"></span>
<span class="cell" style="width:22px">${tbx('pin')}</span>
<span class="cell" style="width:28px"></span><span class="cell" style="width:22px">${tbx('swirl')}</span>
<span class="cell" style="width:31px"></span><span class="cell" style="width:22px">${tbx('edge')}</span>
<span class="cell" style="width:26px"></span><span class="cell" style="width:22px">${tbx('store')}</span>
<span class="cell" style="width:18px"></span><span class="cell u" style="width:40px">${tbx('exp')}</span>
<span class="cell" style="width:9px"></span><span class="cell u" style="width:40px">${tbx('g',24,24)}</span>
<span class="cell" style="width:9px"></span><span class="cell u" style="width:40px">${tbx('ge',24,24)}</span>
<span class="cell" style="width:9px"></span><span class="cell u" style="width:40px">${tbx('gr',24,24)}</span>
<span class="cell" style="width:5px"></span><span class="cell u act" style="width:48px">${tbx('app',24,24)}</span>
<div class="tray"><div class="cp"><span>40%</span><span>CPU使用</span></div>
<span style="margin-left:20px">${svg(`<path d="M1 8l5-6 5 6" fill="none" stroke="#fff" stroke-width="1.300"/>`,12,10)}</span>
<span style="margin-left:10px">${svg(`<rect width="16" height="17" fill="#2c2c2c"/><path d="M2 9c3-5 9-5 12 0-3 4-9 4-12 0z" fill="#76b900"/><circle cx="8" cy="9" r="2" fill="#2c2c2c"/>`,16,17)}</span>
<span style="margin-left:8px">${svg(`<rect x="5.500" y="3.500" width="10" height="8" fill="#111" stroke="#fff"/><rect x="7" y="5" width="7" height="5" fill="#fff"/><circle cx="2.500" cy="6" r="2" fill="none" stroke="#fff"/><path d="M2.500 8v5M1 0v3M4 0v3" stroke="#fff"/>`,16,14)}</span>
<span style="margin-left:11px">${svg(`<path d="M1 13a12 12 0 0 1 12-12M4 13a9 9 0 0 1 9-9M7 13a6 6 0 0 1 6-6" fill="none" stroke="#ccc" stroke-dasharray="2 1"/><circle cx="11" cy="12" r="1.500" fill="#fff"/>`,14,14)}</span>
<span style="margin-left:7px">${svg(`<path d="M1 5h3l4-4v13L4 10H1z" fill="none" stroke="#fff"/><path d="M10 4c2 2 2 5 0 7M12 2c3 3 3 8 0 11" stroke="#999" fill="none"/>`,15,15)}</span>
<span style="margin-left:10px;font-size:13px">英</span>
<span style="margin-left:14px;display:flex;align-items:center;justify-content:center;width:15px;height:18px;background:#f0501e;border-radius:3px;font:700 15px 'Liberation Sans',sans-serif;transform:rotate(-4deg)">S</span>
<div class="tm"><span>8:16</span><span>2017/7/23</span></div>
<div class="nt">${svg(`<path d="M0 0h14v12H6l-3 3v-3H0z" fill="#fff"/><path d="M2 3h10M2 6h10M2 9h7" stroke="#111"/>`,14,15)}<span class="num">2</span></div></div>`);

def('gl-badge',`:host{position:absolute;left:1085px;top:-25px;width:43px;height:43px;border-radius:50%;background:#3fba55;box-shadow:0 2px 3px rgba(0,0,0,.55),0 0 0 1px #b8c8b8;color:#fff;font:700 11px/1 "Liberation Sans",sans-serif;display:flex;align-items:flex-end;justify-content:center;padding-bottom:6px;box-sizing:border-box}`,`<slot></slot>`);

const dot=(c,l)=>l.map(p=>`<circle cx="${p[0]}" cy="${p[1]}" r="2.600" fill="${c}"/>`).join('');
const W='stroke="#fff" fill="none"',R='stroke="#f00" stroke-width="2" fill="none"';
const tx=(s,x,y,sz,extra='')=>`<text x="${x}" y="${y}" font-size="${sz}" fill="#eef4ff" font-family="Noto Sans CJK SC,sans-serif" ${extra}>${s}</text>`;
const cad=`
<g ${W}>
<path d="M1127 174.500H1366M1129 281.500H1366M1151.500 152V310M1352.500 153V309"/>
<path d="M1238 174L1246 162L1253 187L1260 175M1139 232L1151 226L1152 239L1164 232M1341 233L1353 227L1353 240L1365 233M1243 282L1247 273L1250 291L1255 282"/>
<rect x="1220.500" y="193.500" width="48" height="37"/>
<path d="M1280.500 193V231M1272 193.500H1284M1272 230.500H1284M1276 190L1284 197M1276 227L1284 234"/>
<path d="M1220 241.500H1269M1220.500 233V246M1268.500 233V246M1217 244L1224 238M1265 244L1272 238"/>
<path d="M1059.500 318V402M1059 334.500H1196.500V426.500H1295.500V334.500H1366"/>
<path d="M1059 394.500H1104.500L1151 491.500H1336L1366 437"/>
<path d="M1104.500 395V492" stroke-dasharray="4 2"/>
<path d="M1102 502.500H1199M1104.500 496V510M1151.500 496V510M1197.500 496V510M1100 506L1108 499M1148 506L1155 499M1194 506L1201 499"/>
<path d="M1132.500 501.500L1121 515M1163 498L1186 522M1206.500 339V391L1190 406M1206.500 359L1191 369M1206.500 378L1191 386"/>
<path d="M1112 444L1117.500 398M1112 444L1125.500 417M1112 444L1131 433M1112 444L1138 447M1112 444L1144.500 459"/>
<path d="M1210 418.500H1288.500M1210.500 418.500H1220L1215 426ZM1242.500 427V495M1266 507.500H1349"/>
<path d="M1219 497L1245 507M1270 493L1287 507M1291 493L1308 507M1311 493L1329 507M1221 483L1251 516M1333 491L1349 507"/>
<path d="M1053 361.500H1066M1056 364L1060 358"/>
<path d="M1343 491C1344 484 1342 480 1336 476"/>
</g>
<g ${R}>
<path d="M1059 337.500H1191V462M1298.500 483V337.500H1366M1059 389H1156M1330 389H1366M1143 432H1341"/>
<path d="M1151 485.500H1334L1366 420"/>
<path d="M1094.500 359L1151 485" stroke-width="1.500"/>
</g>
${dot('#00ff00',[[1187.700,350.700],[1187.700,368.300],[1187.700,385.700],[1187.700,406.700],[1187.700,423.300],[1303.700,350.700],[1303.700,368.300],[1302.700,383.300],[1302.700,401.700],[1302.700,423.300],[1117.700,398.300],[1125.700,416.700],[1131.300,432.700],[1138.300,446.700],[1144.700,459.300],[1362.700,413.300],[1356.300,429.300],[1348.300,443.700],[1343.300,455.300],[1336.700,471.700]])}
${dot('#ff00ff',[[1193.700,434.300],[1212.700,434.300],[1230.300,434.300],[1253.300,434.300],[1275.700,434.300],[1296.700,434.300],[1154.700,482.700],[1174.300,482.700],[1193.700,482.700],[1211.700,482.700],[1228.700,482.700],[1247.700,482.700],[1267.700,482.700],[1290.700,482.700],[1310.700,482.700],[1329.300,482.700]])}
<text x="1192.700" y="217" font-size="20" fill="#00c8e0" text-anchor="middle" font-family="Liberation Sans,sans-serif">1</text><path d="M1185 220.500H1199" stroke="#00ffff" stroke-width="1.500"/>
<text x="1316" y="217" font-size="20" fill="#00c8e0" text-anchor="middle" font-family="Liberation Sans,sans-serif">1</text><path d="M1309 220.500H1323" stroke="#00ffff" stroke-width="1.500"/>
<text x="1324" y="555" font-size="32" fill="#00e8f0" font-family="Liberation Serif,serif">1−1</text><path d="M1315 558H1366" stroke="#00ffff" stroke-width="1.500"/>
${tx('X向',1245,259,14,'text-anchor="middle"')}
${tx('Y向',1290,217,14,'text-anchor="middle" transform="rotate(-90 1290 212)"')}
${tx('坑壁水平筋',1219,348,19.500,'text-anchor="middle" transform="rotate(-90 1219 341)"')}
${tx('坑板顶标高',1203,414,19.500)}${tx('坑底板厚度',1210,470,19.500)}
${tx('放坡底宽',1074,534,19.500)}${tx('出边距离',1162,534,19.500)}
${tx('X向钢筋',1243,531,19.500)}
${tx('斜面钢筋',1104,452,19.500,'text-anchor="middle" transform="rotate(54 1104 446)"')}
${tx('Y向',1349,515,18)}${tx('放',1356,482,19.500)}`;
def('gl-dialog',`:host{position:absolute;left:869px;top:98px;width:497px;height:492px;box-sizing:border-box;border:1px solid #555;border-right:0;background:#dce8f4;display:flex;flex-direction:column}
.t{height:30px;flex:none;background:linear-gradient(#b9c9d7,#dde9f5);color:#9a9a9a;padding:10px 0 0 8px;box-sizing:border-box;line-height:16px}
.c{margin-left:8px;flex:1;min-height:0;background:#000;border-top:1px solid #fff;overflow:hidden;margin-bottom:7px;border-bottom:1px solid #999}`,
`<div class="t">参数图</div><div class="c"><svg width="488" height="452" viewBox="878 130 488 452" style="display:block">${cad}</svg></div>`);

def('gl-ime',`:host{position:absolute;left:603px;top:690px;display:flex;align-items:center;height:27px}
.s{width:26px;height:26px;background:#f0501e;border-radius:5px;transform:rotate(-6deg);color:#fff;font:700 23px/26px "Liberation Sans",sans-serif;text-align:center;position:relative;z-index:1;flex:none}
.b{width:157px;height:23px;margin-left:1px;background:#f5f9fd;border:1px solid #c4d6e8;box-sizing:border-box;display:flex;align-items:center;padding-left:6px}
.y{color:#1468b8;font:700 14px ${CJK};width:24px}`,
`<span class="s">S</span><div class="b"><span class="y">英</span>
${svg(`<circle cx="2" cy="4" r="1.500" fill="#1468b8"/><path d="M7 7c1 2 0 4-2 5" stroke="#1468b8" stroke-width="1.500" fill="none"/>`,10,14)}
<span style="width:12px"></span>${svg(`<rect x="3.500" y="0" width="6" height="10" rx="3" fill="#1468b8"/><path d="M1 7c0 6 11 6 11 0M6.500 12v3M3 15.500h7" stroke="#1468b8" fill="none"/>`,13,16)}
<span style="width:8px"></span>${svg(`<rect x=".5" y="1.500" width="15" height="10" rx="1" fill="#fff" stroke="#1468b8" stroke-width="1.500"/><path d="M3 4.500h10M3 7h10" stroke="#1468b8" stroke-dasharray="1.500 1" stroke-width="1.500"/><path d="M4 9.500h8" stroke="#1468b8"/>`,16,13)}
<span style="width:8px"></span>${svg(`<circle cx="6" cy="4" r="3" fill="#b4c0cc"/><path d="M1 14c0-6 9-6 10-3v3z" fill="#b4c0cc"/><rect x="8" y="9" width="8" height="6" fill="#dde6ee"/>`,16,16)}
<span style="width:5px"></span>${svg(`<path d="M4 1l3 1 3-1 4 3-2 3-1-1v8H3V6L2 7 0 4z" fill="#1468b8"/>`,14,14)}
<span style="width:8px"></span>${svg(`<path d="M14 2l-3 3-2-1 2-3c-3-1-5 1-4 4L1 11c-1 2 1 3 2 2l6-6c3 1 6-2 5-5z" fill="#1468b8"/>`,15,15)}</div>`);

const arrow=(x1,y1,x2,y2)=>{
  const a=Math.atan2(y2-y1,x2-x1),s=11,wd=.42;
  const p=(t)=>[(x2-s*Math.cos(a+t)).toFixed(1),(y2-s*Math.sin(a+t)).toFixed(1)].join(',');
  return `<path d="M${x1} ${y1}L${x2} ${y2}" stroke="#f00" stroke-width="2.500" fill="none"/><polygon points="${x2},${y2} ${p(wd)} ${p(-wd)}" fill="#f00"/>`;
};
def('gl-marks',`:host{position:absolute;left:0;top:0;width:1366px;height:768px;pointer-events:none}
svg{display:block}text{font-family:${CJK};font-weight:700;fill:#f00;font-size:20px;letter-spacing:3.100px}`,
`<svg width="1366" height="768" viewBox="0 0 1366 768">
<ellipse cx="639" cy="184.500" rx="89" ry="17" fill="none" stroke="#f00" stroke-width="2.600"/>
<ellipse cx="657" cy="332.500" rx="84.500" ry="115.500" fill="none" stroke="#f00" stroke-width="2.600"/>
${arrow(835,252,721,188)}${arrow(890,447,744,373)}
<text x="810" y="273">长度按照图纸计算分段填写</text>
<text x="891" y="458">按照图纸填写</text></svg>`);
</script>
</body></html>
